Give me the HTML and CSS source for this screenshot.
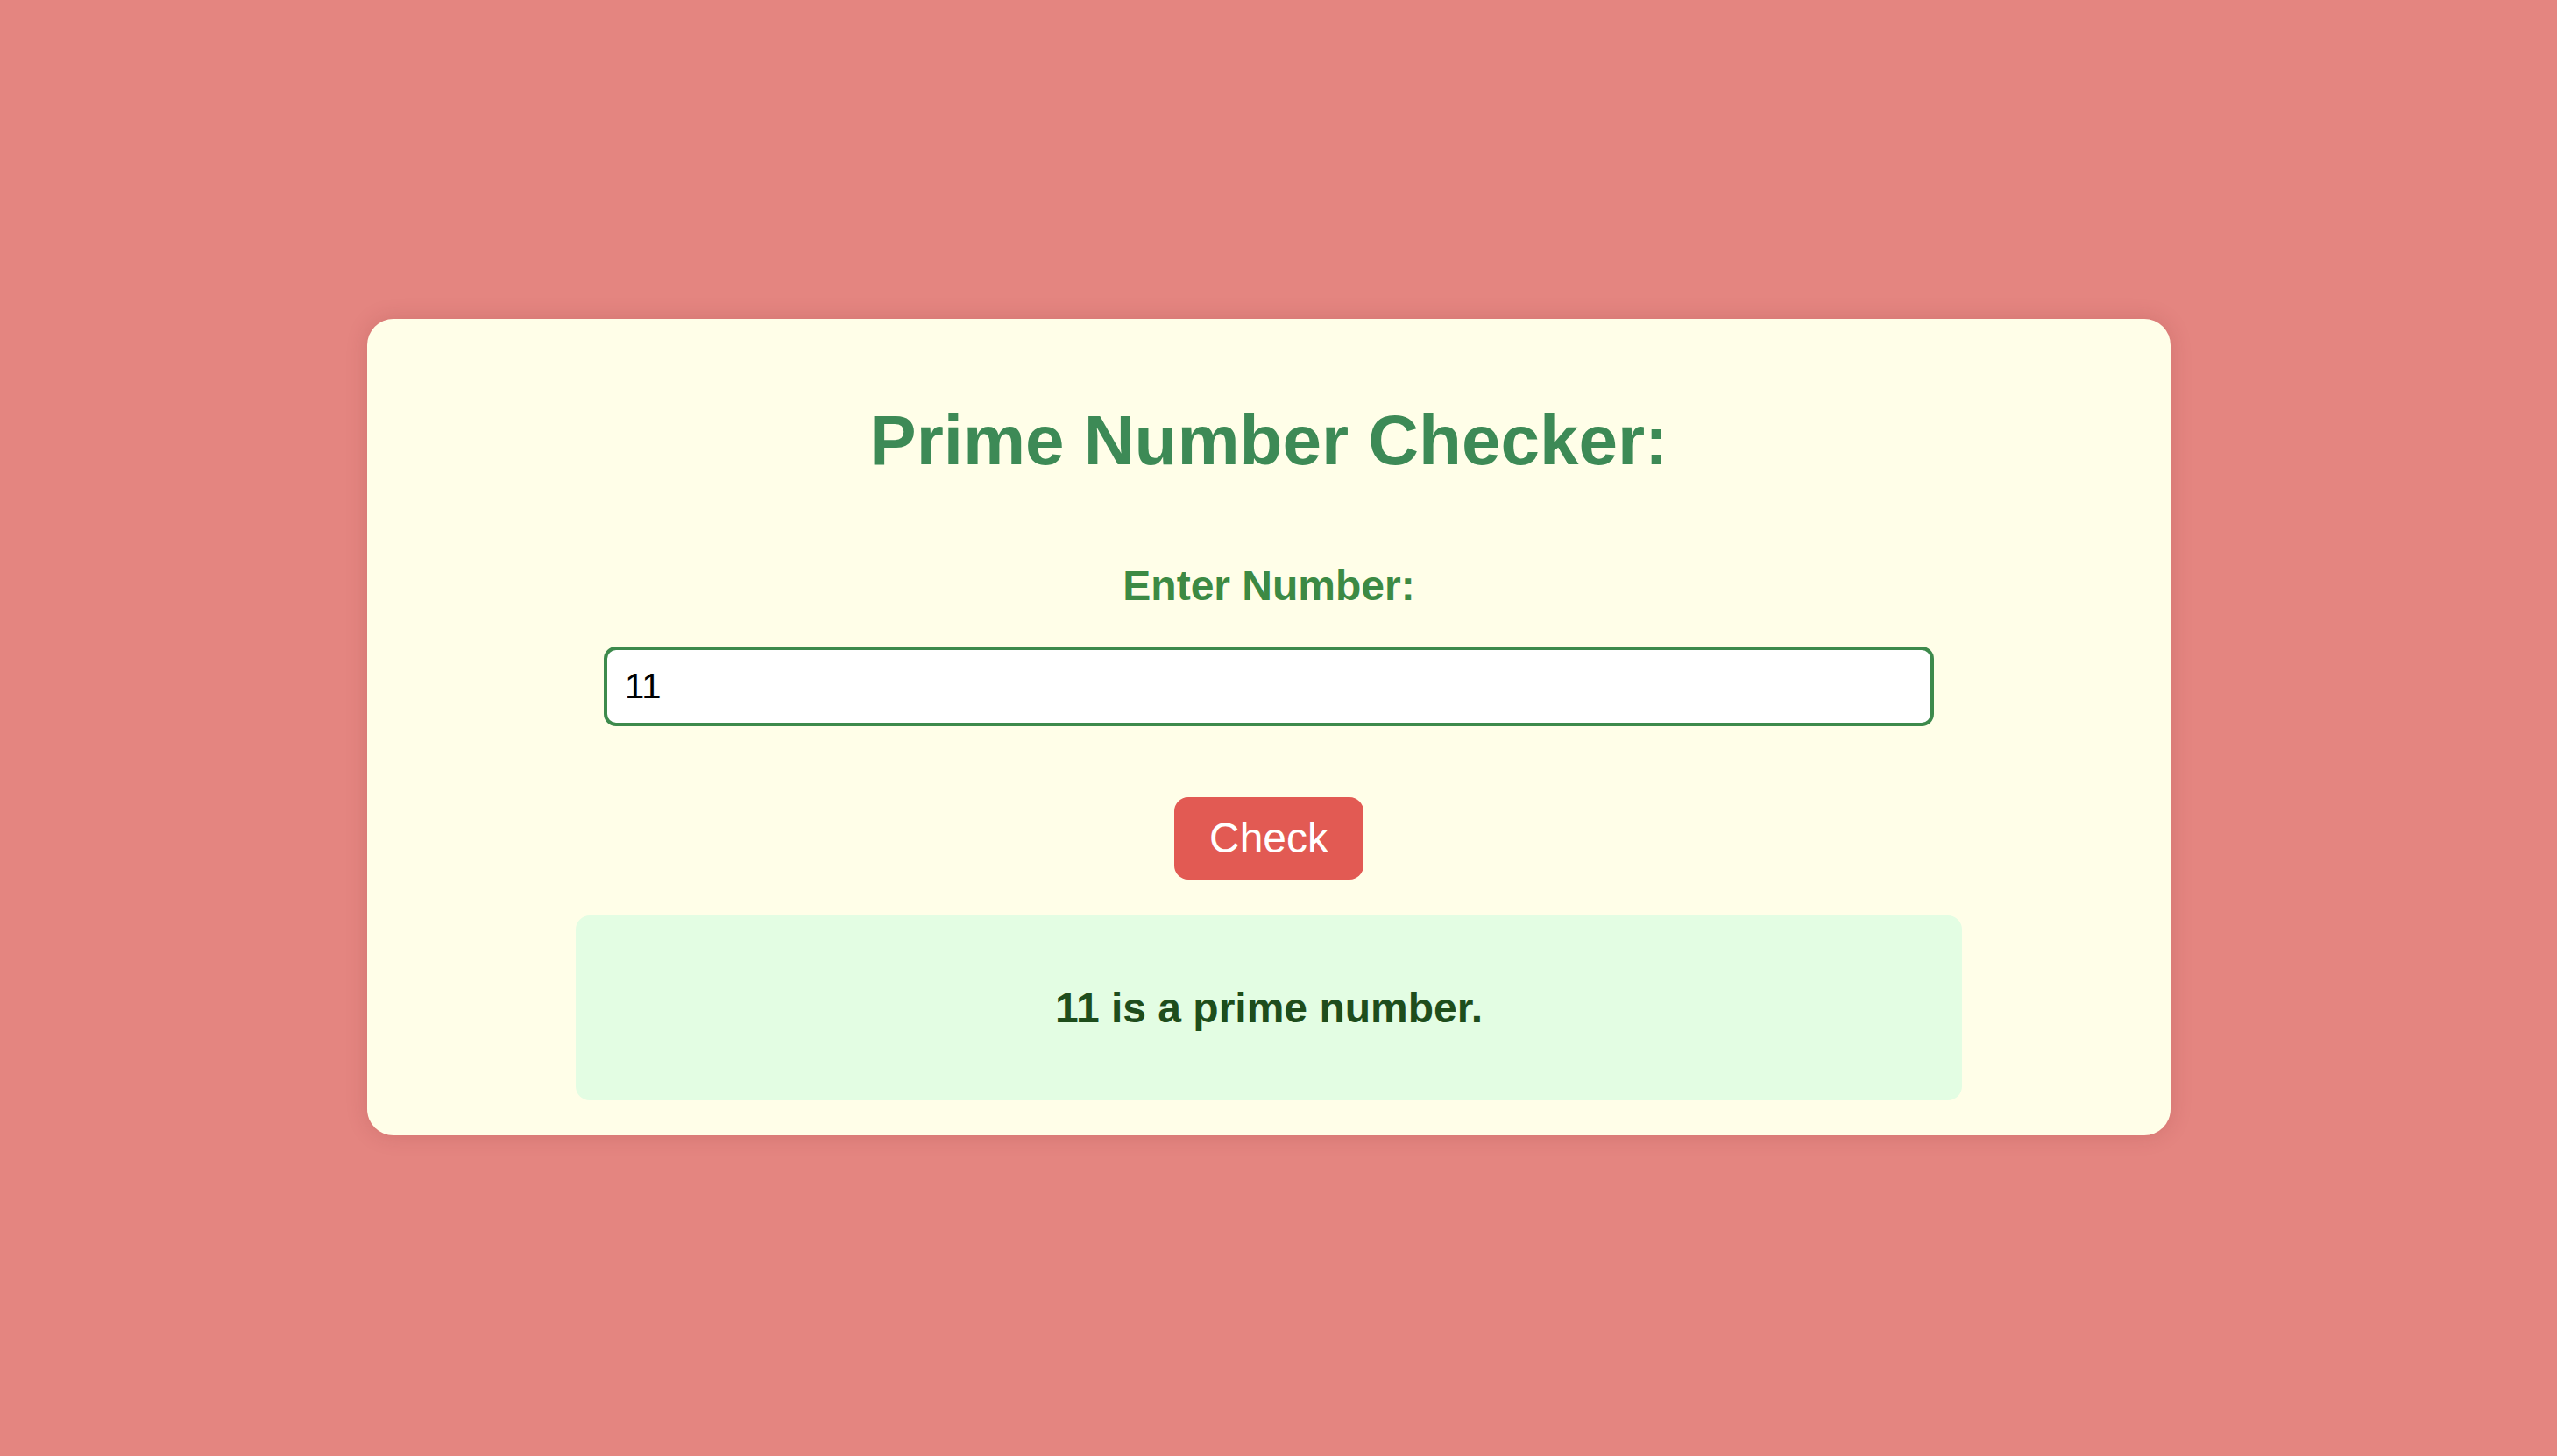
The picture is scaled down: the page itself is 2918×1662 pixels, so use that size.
FILE: index.html
```html
<!DOCTYPE html>
<html lang="en">
<head>
<meta charset="utf-8">
<title>Prime Number Checker</title>
<link rel="stylesheet" href="styles.css">
</head>
<body>
  <main class="card">
    <h1 class="title">Prime Number Checker:</h1>
    <label class="label" for="num">Enter Number:</label>
    <input class="num-input" id="num" type="text" value="11">
    <button class="check-btn" type="button">Check</button>
    <div class="result">
      <p class="result-text">11 is a prime number.</p>
    </div>
  </main>
</body>
</html>
```

FILE: styles.css
```css
* {
  box-sizing: border-box;
}

html, body {
  margin: 0;
  height: 100%;
}

body {
  background: #e48580;
  font-family: "Liberation Sans", Arial, Helvetica, sans-serif;
  display: flex;
  justify-content: center;
  align-items: center;
  min-height: 100vh;
  padding: 0 22px 2px 0;
}

.card {
  width: 2058px;
  background: #fffee8;
  border-radius: 30px;
  padding: 40px;
  display: flex;
  flex-direction: column;
  align-items: center;
  box-shadow: 0 0 24px rgba(120, 40, 40, 0.18);
}

.title {
  margin: 54px 0 0;
  font-size: 80px;
  line-height: 90px;
  font-weight: 700;
  color: #3d8a56;
}

.label {
  display: block;
  margin-top: 94px;
  font-size: 48px;
  line-height: 54px;
  font-weight: 700;
  color: #3c8a44;
}

.num-input {
  margin-top: 42px;
  width: 1518px;
  height: 91px;
  border: 4px solid #3d8a4c;
  border-radius: 14px;
  background: #ffffff;
  padding: 0 20px;
  font-family: "Liberation Sans", Arial, Helvetica, sans-serif;
  font-size: 40px;
  color: #000000;
  outline: none;
}

.check-btn {
  margin-top: 81px;
  background: #e25a53;
  color: #ffffff;
  border: none;
  border-radius: 16px;
  padding: 20px 40px;
  font-family: "Liberation Sans", Arial, Helvetica, sans-serif;
  font-size: 48px;
  line-height: 54px;
  cursor: pointer;
}

.result {
  margin-top: 41px;
  width: 1582px;
  background: #e3fde3;
  border-radius: 16px;
  padding: 79px 0 78px;
  text-align: center;
}

.result-text {
  margin: 0;
  font-size: 48px;
  line-height: 54px;
  font-weight: 700;
  color: #1e4d1c;
}
```
